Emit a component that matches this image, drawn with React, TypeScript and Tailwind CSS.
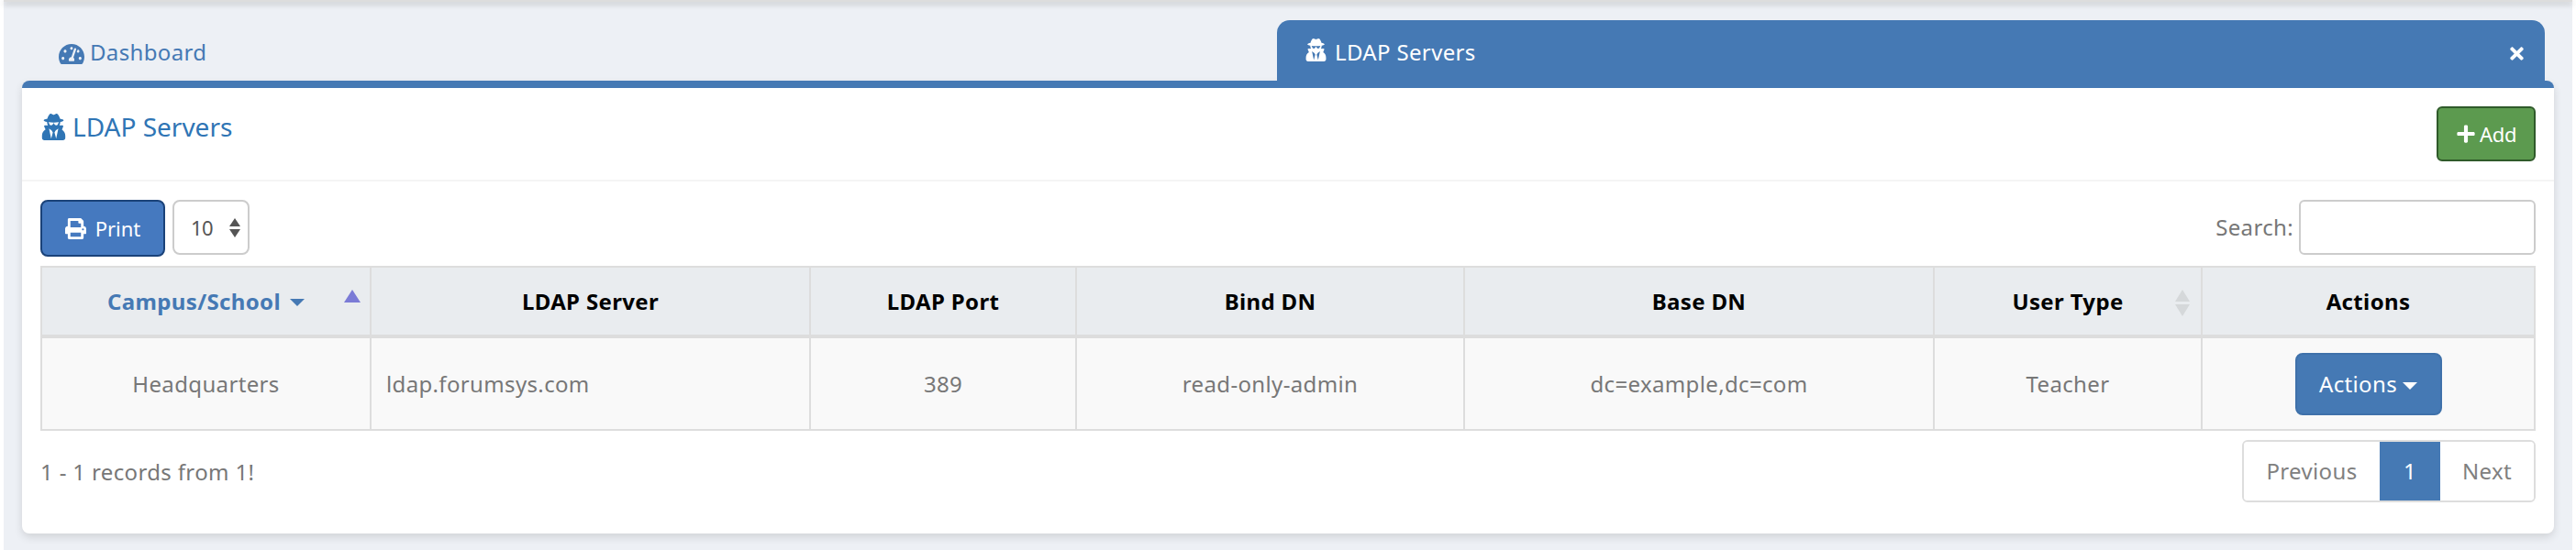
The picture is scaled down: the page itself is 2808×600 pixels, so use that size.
import React from 'react';
import { FaPlus, FaPrint, FaTachometerAlt, FaTimes, FaUserSecret } from 'react-icons/fa';

function Caret({ className }: { className: string }) {
  return (
    <svg viewBox="0 0 16 8" preserveAspectRatio="none" className={className} fill="currentColor">
      <path d="M0 0h16L8 8z" />
    </svg>
  );
}

const rows = ['Headquarters', 'ldap.forumsys.com', '389', 'read-only-admin', 'dc=example,dc=com', 'Teacher'];

export default function App() {
  return (
    <div className="h-[600px] w-[2808px] overflow-hidden bg-white font-['Noto_Sans',sans-serif] text-[24px] tracking-[0.35px] text-[#777]">
      <div className="mx-[4px] h-[600px] bg-[#edf0f5]">
        <div className="h-[2px] bg-[#ddd] shadow-[0_2px_6px_rgba(0,0,0,0.35)]" />
        <div className="px-[20px] pt-[20px]">
          <div className="flex h-[66px] items-stretch">
            <div className="flex w-[1368px] items-start gap-[6px] pl-[40px] pt-[20px] text-[#4579b4]">
              <FaTachometerAlt className="mt-[3px] size-[28px]" />
              <span className="leading-[30px]">Dashboard</span>
            </div>
            <div className="relative z-10 mb-[-8px] flex w-[1382px] items-start gap-[8px] rounded-t-[14px] bg-[#4579b4] pl-[30px] pt-[20px] text-white">
              <FaUserSecret className="mt-[0px] size-[25px]" />
              <span className="leading-[30px]">LDAP Servers</span>
              <FaTimes className="absolute right-[20px] top-[26px] size-[21px]" />
            </div>
          </div>

          <div className="rounded-[8px] border-t-[8px] border-[#4579b4] bg-white shadow-[0_4px_10px_rgba(0,0,0,0.12)]">
            <div className="flex h-[102px] items-start justify-between border-b-[2px] border-[#f4f4f4] pl-[20px] pr-[20px] pt-[20px]">
              <div className="flex items-center gap-[6px] text-[28px] leading-[44px] tracking-normal text-[#2f75b5]">
                <FaUserSecret className="size-[29px]" />
                <span>LDAP Servers</span>
              </div>
              <button className="flex h-[60px] w-[108px] items-center justify-center gap-[4px] rounded-[6px] border-[2px] border-[#2f5a2a] bg-[#5c9a4f] text-[22px] tracking-[-0.3px] text-white">
                <FaPlus className="size-[22px]" />
                Add
              </button>
            </div>

            <div className="px-[20px] pt-[20px]">
              <div className="flex h-[72px] items-start">
                <button className="flex h-[62px] w-[136px] items-center justify-center gap-[10px] rounded-[8px] border-[2px] border-[#1a4279] bg-[#4579bf] text-[22px] tracking-normal text-white">
                  <FaPrint className="size-[23px]" />
                  Print
                </button>
                <div className="ml-[8px] flex h-[60px] w-[84px] items-center justify-between rounded-[8px] border-[2px] border-[#ccc] pl-[18px] pr-[8px] text-[22px] tracking-[-0.5px] text-[#555]">
                  10
                  <span className="flex flex-col gap-[3px] text-[#555]">
                    <Caret className="h-[9px] w-[12px] rotate-180" />
                    <Caret className="h-[9px] w-[12px]" />
                  </span>
                </div>
                <div className="ml-auto flex items-center gap-[6px]">
                  <span>Search:</span>
                  <div className="h-[60px] w-[258px] rounded-[6px] border-[2px] border-[#ccc]" />
                </div>
              </div>

              <table className="w-[2720px] table-fixed border-collapse">
                <thead>
                  <tr className="h-[76px] border-b-[4px] border-[#ddd] bg-[#e9ecef] font-bold text-black">
                    <th className="relative w-[359px] border-[2px] border-[#ddd] font-bold text-[#4579b4]">
                      <span className="inline-flex items-center gap-[10px]">
                        Campus/School
                        <Caret className="mt-[3px] h-[8px] w-[16px]" />
                      </span>
                      <Caret className="absolute right-[10px] top-[24px] h-[14px] w-[18px] rotate-180 text-[#7b7bd6]" />
                    </th>
                    <th className="w-[479px] border-[2px] border-[#ddd]">LDAP Server</th>
                    <th className="w-[290px] border-[2px] border-[#ddd]">LDAP Port</th>
                    <th className="w-[423px] border-[2px] border-[#ddd]">Bind DN</th>
                    <th className="w-[512px] border-[2px] border-[#ddd]">Base DN</th>
                    <th className="relative w-[292px] border-[2px] border-[#ddd]">
                      User Type
                      <span className="absolute right-[12px] top-[24px] flex flex-col gap-[3px] text-[#d5d8da]">
                        <Caret className="h-[13px] w-[16px] rotate-180" />
                        <Caret className="h-[13px] w-[16px]" />
                      </span>
                    </th>
                    <th className="border-[2px] border-[#ddd]">Actions</th>
                  </tr>
                </thead>
                <tbody>
                  <tr className="h-[102px] bg-[#f9f9f9]">
                    {rows.map((cell, i) => (
                      <td key={cell} className={i === 1 ? 'border-[2px] border-[#ddd] pl-[16px]' : 'border-[2px] border-[#ddd] text-center'}>
                        {cell}
                      </td>
                    ))}
                    <td className="border-[2px] border-[#ddd] text-center">
                      <button className="inline-flex h-[68px] w-[160px] items-center justify-center gap-[6px] rounded-[8px] border-[2px] border-[#3f71aa] bg-[#4579b4] text-white">
                        Actions
                        <Caret className="mt-[4px] h-[8px] w-[16px]" />
                      </button>
                    </td>
                  </tr>
                </tbody>
              </table>

              <div className="mt-[10px] flex items-start justify-between">
                <span className="pt-[18px] leading-[34px]">1 - 1 records from 1!</span>
                <div className="flex h-[68px] w-[320px] overflow-hidden rounded-[6px] border-[2px] border-[#ddd]">
                  <span className="flex w-[148px] items-center justify-center bg-white text-[#808080]">Previous</span>
                  <span className="my-[-2px] flex w-[66px] items-center justify-center bg-[#4579b4] text-white">1</span>
                  <span className="flex flex-1 items-center justify-center bg-white text-[#808080]">Next</span>
                </div>
              </div>
            </div>
            <div className="h-[34px]" />
          </div>
        </div>
      </div>
    </div>
  );
}
